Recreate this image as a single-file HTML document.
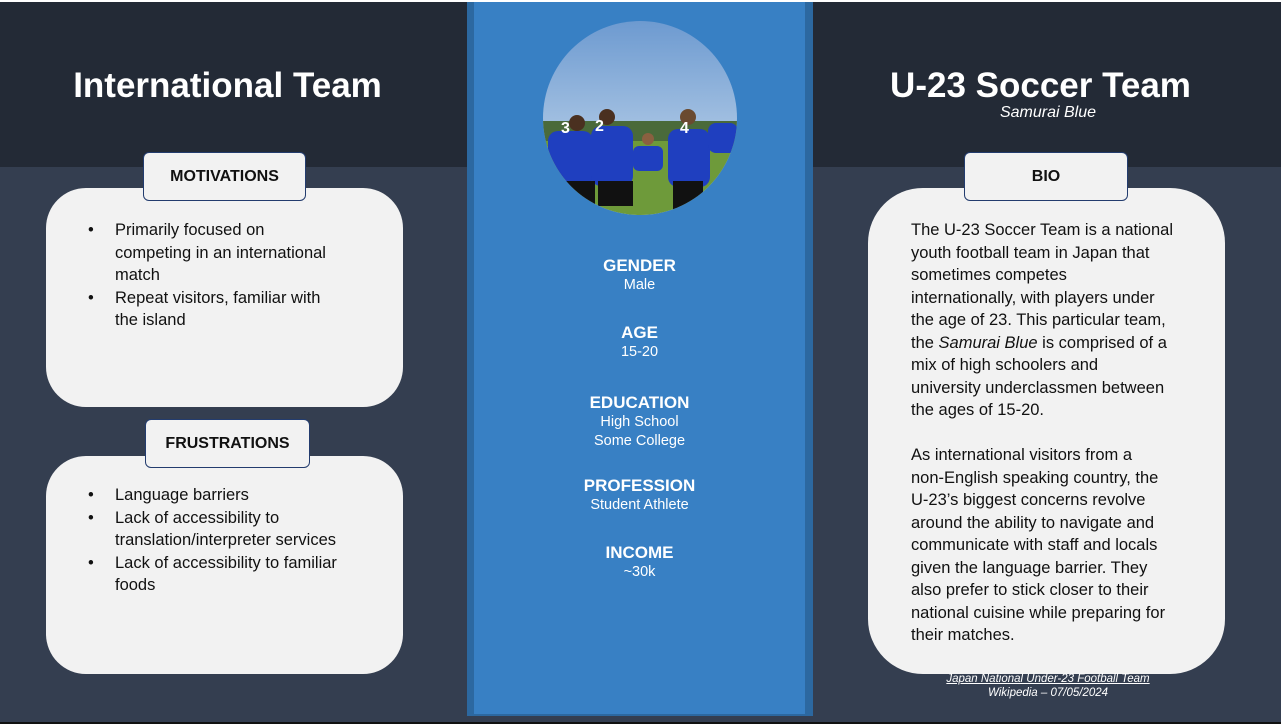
<!DOCTYPE html><html><head><style>
body{margin:0;width:1281px;height:724px;overflow:hidden;background:#343e50;font-family:"Liberation Sans",sans-serif;position:relative}
.top{position:absolute;left:0;top:0;width:1281px;height:167px;background:#232a36}
.a{position:absolute}
.box{position:absolute;background:#f2f2f2;color:#111;font-size:16.5px;line-height:22.5px;white-space:nowrap}
.lab{position:absolute;background:#f2f2f2;border:1px solid #233c6e;border-radius:6px;font-weight:bold;font-size:16px;text-align:center;color:#111;box-sizing:border-box}
ul{margin:0;padding-left:58px;list-style:none}li{padding-left:11px;position:relative}
li:before{content:"•";position:absolute;left:-16px}
.c{position:absolute;left:474px;width:331px;text-align:center;color:#fff}
.c b{display:block;font-size:17px}
.c span{font-size:14.5px;line-height:19px}
</style></head><body>
<div class="top"></div>
<div class="a" style="left:0;top:0;width:1281px;height:2px;background:#fff"></div>
<div class="a" style="left:467px;top:2px;width:346px;height:714px;background:#2c68a0"></div>
<div class="a" style="left:474px;top:2px;width:331px;height:712px;background:#3880c4"></div>
<div class="a" style="left:0;top:66px;width:455px;text-align:center;color:#fff;font-weight:bold;font-size:35px">International Team</div>
<div class="a" style="left:813px;top:66px;width:455px;text-align:center;color:#fff;font-weight:bold;font-size:35px">U-23 Soccer Team</div>
<div class="a" style="left:813px;top:104px;width:470px;text-align:center;color:#fff;font-style:italic;font-size:16px">Samurai Blue</div>
<svg class="a" style="left:543px;top:21px" width="194" height="194" viewBox="0 0 194 194"><defs><clipPath id="cp"><circle cx="97" cy="97" r="97"/></clipPath><linearGradient id="s" x1="0" y1="0" x2="0" y2="1"><stop offset="0" stop-color="#6d9ad0"/><stop offset="1" stop-color="#cfe0f0"/></linearGradient></defs><g clip-path="url(#cp)"><rect width="194" height="194" fill="url(#s)"/><rect y="100" width="194" height="25" fill="#4a6a3a"/><rect y="120" width="194" height="80" fill="#6e9a3a"/>
<rect x="5" y="110" width="45" height="55" rx="10" fill="#1f3fbf"/><rect x="48" y="105" width="42" height="60" rx="10" fill="#1f3fbf"/><rect x="125" y="108" width="42" height="58" rx="10" fill="#1f3fbf"/><rect x="165" y="102" width="30" height="30" rx="8" fill="#1f3fbf"/><rect x="90" y="125" width="30" height="25" rx="6" fill="#1f3fbf"/><rect x="12" y="160" width="40" height="25" fill="#111"/><rect x="55" y="160" width="35" height="25" fill="#111"/><rect x="130" y="160" width="30" height="30" fill="#111"/>
<circle cx="34" cy="102" r="8" fill="#4a3020"/><circle cx="64" cy="96" r="8" fill="#4a3020"/><circle cx="145" cy="96" r="8" fill="#6a4a30"/><circle cx="105" cy="118" r="6" fill="#8a6040"/>
<text x="18" y="112" fill="#fff" font-size="16" font-weight="bold">3</text><text x="52" y="110" fill="#fff" font-size="16" font-weight="bold">2</text><text x="137" y="112" fill="#fff" font-size="16" font-weight="bold">4</text></g></svg>
<div class="c" style="top:256px"><b>GENDER</b><span>Male</span></div>
<div class="c" style="top:323px"><b>AGE</b><span>15-20</span></div>
<div class="c" style="top:393px"><b>EDUCATION</b><span>High School<br>Some College</span></div>
<div class="c" style="top:476px"><b>PROFESSION</b><span>Student Athlete</span></div>
<div class="c" style="top:543px"><b>INCOME</b><span>~30k</span></div>
<div class="box" style="left:46px;top:188px;width:357px;height:219px;border-radius:40px;padding-top:31px;box-sizing:border-box"><ul><li>Primarily focused on<br>competing in an international<br>match</li><li>Repeat visitors, familiar with<br>the island</li></ul></div>
<div class="lab" style="left:143px;top:152px;width:163px;height:49px;line-height:47px">MOTIVATIONS</div>
<div class="box" style="left:46px;top:456px;width:357px;height:218px;border-radius:40px;padding-top:28px;box-sizing:border-box"><ul><li>Language barriers</li><li>Lack of accessibility to<br>translation/interpreter services</li><li>Lack of accessibility to familiar<br>foods</li></ul></div>
<div class="lab" style="left:145px;top:419px;width:165px;height:49px;line-height:47px">FRUSTRATIONS</div>
<div class="box" style="left:868px;top:188px;width:357px;height:486px;border-radius:55px;padding:31px 10px 0 43px;box-sizing:border-box">The U-23 Soccer Team is a national<br>youth football team in Japan that<br>sometimes competes<br>internationally, with players under<br>the age of 23. This particular team,<br>the <i>Samurai Blue</i> is comprised of a<br>mix of high schoolers and<br>university underclassmen between<br>the ages of 15-20.<br><br>As international visitors from a<br>non-English speaking country, the<br>U-23’s biggest concerns revolve<br>around the ability to navigate and<br>communicate with staff and locals<br>given the language barrier. They<br>also prefer to stick closer to their<br>national cuisine while preparing for<br>their matches.</div>
<div class="lab" style="left:964px;top:152px;width:164px;height:49px;line-height:47px">BIO</div>
<div class="a" style="left:868px;top:672px;width:360px;text-align:center;color:#fff;font-style:italic;font-size:11.5px;line-height:14px"><u>Japan National Under-23 Football Team</u><br>Wikipedia – 07/05/2024</div>
<div class="a" style="left:0;top:722px;width:1281px;height:2px;background:#111"></div>
</body></html>
